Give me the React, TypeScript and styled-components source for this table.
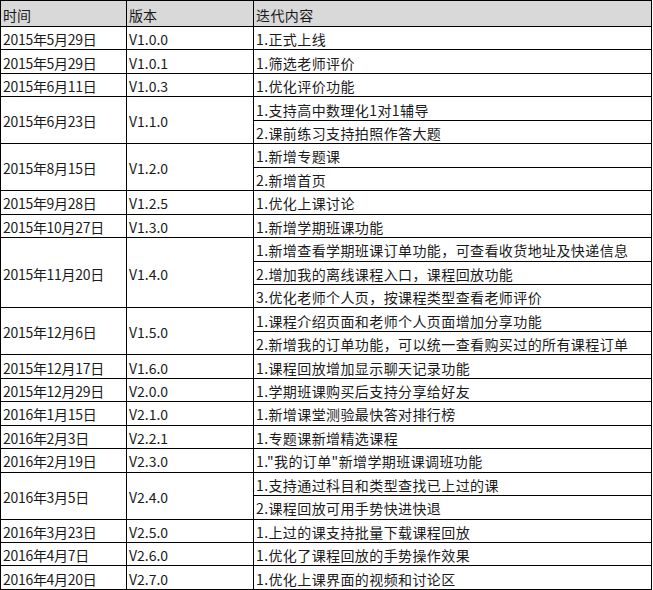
import styled, { createGlobalStyle } from 'styled-components';

const GlobalStyle = createGlobalStyle`
  body {
    margin: 0;
    background: #ffffff;
    font-family: "Noto Sans CJK SC", "Noto Sans", sans-serif;
    color: #1a1a1a;
  }
`;

const Table = styled.table`
  border-collapse: collapse;
  table-layout: fixed;
  width: 652px;
  font-size: 14px;
  font-weight: 400;
`;

const HeadRow = styled.tr`
  height: 26px;
  background-color: #d9d9d9;
`;

const Row = styled.tr`
  height: 23.46px;
`;

const Cell = styled.td<{ $spacing?: number }>`
  border: 1px solid #000000;
  padding: 2px 2px 0;
  line-height: 20px;
  vertical-align: middle;
  white-space: nowrap;
  overflow: hidden;
  letter-spacing: ${(p) => p.$spacing ?? 0}px;
`;

const HeadCell = styled(Cell).attrs({ as: 'th' })`
  font-weight: 400;
  text-align: left;
`;

type Release = {
  date: string;
  version: string;
  items: string[];
};

const releases: Release[] = [
  { date: '2015年5月29日', version: 'V1.0.0', items: ['1.正式上线'] },
  { date: '2015年5月29日', version: 'V1.0.1', items: ['1.筛选老师评价'] },
  { date: '2015年6月11日', version: 'V1.0.3', items: ['1.优化评价功能'] },
  {
    date: '2015年6月23日',
    version: 'V1.1.0',
    items: ['1.支持高中数理化1对1辅导', '2.课前练习支持拍照作答大题'],
  },
  { date: '2015年8月15日', version: 'V1.2.0', items: ['1.新增专题课', '2.新增首页'] },
  { date: '2015年9月28日', version: 'V1.2.5', items: ['1.优化上课讨论'] },
  { date: '2015年10月27日', version: 'V1.3.0', items: ['1.新增学期班课功能'] },
  {
    date: '2015年11月20日',
    version: 'V1.4.0',
    items: [
      '1.新增查看学期班课订单功能，可查看收货地址及快递信息',
      '2.增加我的离线课程入口，课程回放功能',
      '3.优化老师个人页，按课程类型查看老师评价',
    ],
  },
  {
    date: '2015年12月6日',
    version: 'V1.5.0',
    items: ['1.课程介绍页面和老师个人页面增加分享功能', '2.新增我的订单功能，可以统一查看购买过的所有课程订单'],
  },
  { date: '2015年12月17日', version: 'V1.6.0', items: ['1.课程回放增加显示聊天记录功能'] },
  { date: '2015年12月29日', version: 'V2.0.0', items: ['1.学期班课购买后支持分享给好友'] },
  { date: '2016年1月15日', version: 'V2.1.0', items: ['1.新增课堂测验最快答对排行榜'] },
  { date: '2016年2月3日', version: 'V2.2.1', items: ['1.专题课新增精选课程'] },
  { date: '2016年2月19日', version: 'V2.3.0', items: ['1."我的订单"新增学期班课调班功能'] },
  {
    date: '2016年3月5日',
    version: 'V2.4.0',
    items: ['1.支持通过科目和类型查找已上过的课', '2.课程回放可用手势快进快退'],
  },
  { date: '2016年3月23日', version: 'V2.5.0', items: ['1.上过的课支持批量下载课程回放'] },
  { date: '2016年4月7日', version: 'V2.6.0', items: ['1.优化了课程回放的手势操作效果'] },
  { date: '2016年4月20日', version: 'V2.7.0', items: ['1.优化上课界面的视频和讨论区'] },
];

export default function App() {
  return (
    <>
      <GlobalStyle />
      <Table>
        <colgroup>
          <col style={{ width: 126 }} />
          <col style={{ width: 127 }} />
          <col />
        </colgroup>
        <thead>
          <HeadRow>
            <HeadCell>时间</HeadCell>
            <HeadCell>版本</HeadCell>
            <HeadCell $spacing={0.4}>迭代内容</HeadCell>
          </HeadRow>
        </thead>
        <tbody>
          {releases.map((r) =>
            r.items.map((item, i) => (
              <Row key={r.version + i}>
                {i === 0 && (
                  <>
                    <Cell rowSpan={r.items.length} $spacing={-0.3}>
                      {r.date}
                    </Cell>
                    <Cell rowSpan={r.items.length}>{r.version}</Cell>
                  </>
                )}
                <Cell $spacing={0.4}>{item}</Cell>
              </Row>
            ))
          )}
        </tbody>
      </Table>
    </>
  );
}
